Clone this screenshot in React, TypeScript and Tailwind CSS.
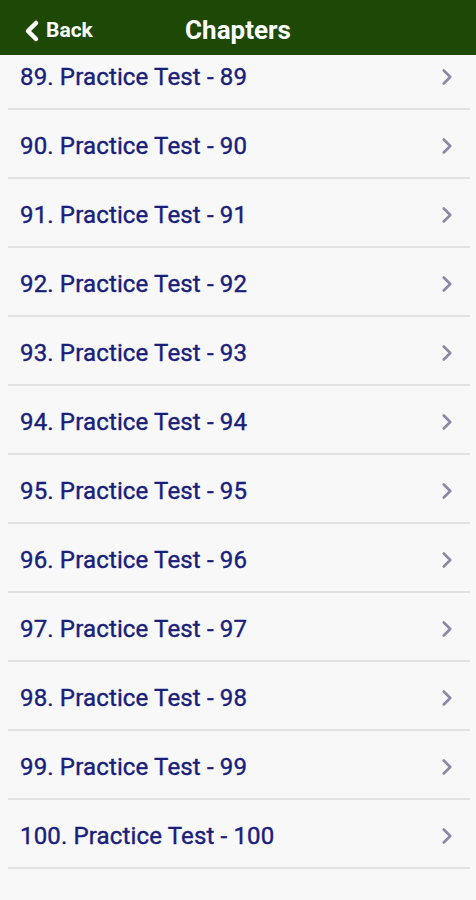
import { ChevronLeft, ChevronRight } from 'lucide-react';

const tests = Array.from({ length: 12 }, (_, i) => 89 + i);

export default function App() {
  return (
    <div className="flex h-[900px] w-[476px] flex-col overflow-hidden bg-[#f8f8f8] font-['Roboto',sans-serif]">
      {/* Header */}
      <header className="relative z-10 flex h-[55px] shrink-0 items-center justify-center bg-[#1d4806] pt-[5px]">
        <button className="absolute left-[16px] top-[15px] flex items-center text-white">
          <ChevronLeft className="h-[32px] w-[32px]" strokeWidth={3.4} />
          <span className="-ml-[2px] text-[21px] font-bold">Back</span>
        </button>
        <h1 className="text-[26px] font-bold text-white">Chapters</h1>
      </header>

      <ul className="-mt-[14px] pl-[8px] pr-[6px]">
        {tests.map((n) => (
          <li
            key={n}
            className="flex h-[69px] items-center justify-between border-b-2 border-[#e2e2e2] pl-[12px] pr-[10px] pt-[4px]"
          >
            <span className="text-[24px] tracking-[0.15px] text-[#18207c] [-webkit-text-stroke:0.4px_#18207c]">
              {n}. Practice Test - {n}
            </span>
            <ChevronRight className="h-[26px] w-[26px] text-[#8a8aa8]" strokeWidth={2.4} />
          </li>
        ))}
      </ul>
    </div>
  );
}
